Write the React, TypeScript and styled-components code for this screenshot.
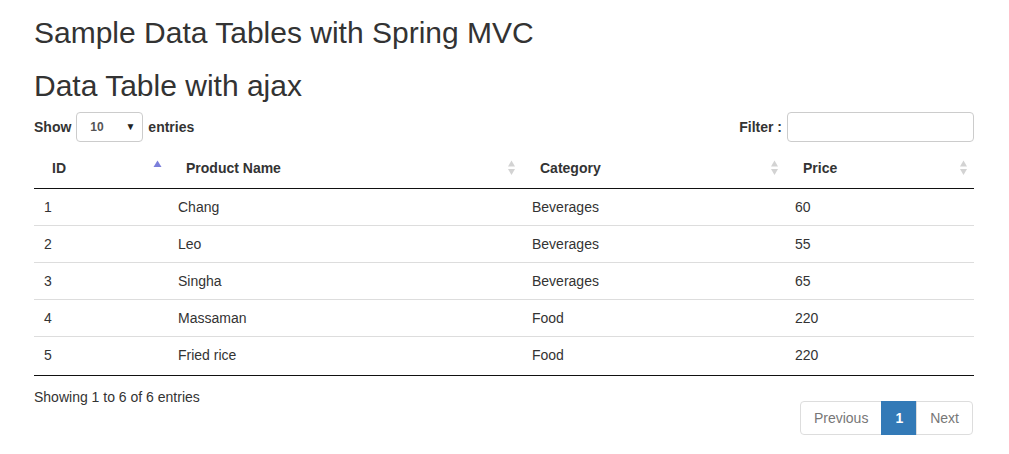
import styled, { createGlobalStyle } from 'styled-components';

const GlobalStyle = createGlobalStyle`
  body {
    margin: 0;
    background: #fff;
    font-family: "Liberation Sans", Arial, sans-serif;
    font-size: 14px;
    line-height: 20px;
    color: #333;
  }
  * { box-sizing: border-box; }
`;

const products = [
  { id: 1, name: 'Chang', category: 'Beverages', price: 60 },
  { id: 2, name: 'Leo', category: 'Beverages', price: 55 },
  { id: 3, name: 'Singha', category: 'Beverages', price: 65 },
  { id: 4, name: 'Massaman', category: 'Food', price: 220 },
  { id: 5, name: 'Fried rice', category: 'Food', price: 220 },
];

const columns = [
  { label: 'ID', width: 134, sort: 'asc' as const },
  { label: 'Product Name', width: 354, sort: 'both' as const },
  { label: 'Category', width: 263, sort: 'both' as const },
  { label: 'Price', width: 189, sort: 'both' as const },
];

const Container = styled.div`
  width: 940px;
  margin: 0 35px 0 34px;
`;

const Heading = styled.h2`
  font-size: 30px;
  font-weight: 500;
  line-height: 33px;
  margin: 16px 0 10px;
  & + & {
    margin-top: 20px;
  }
`;

const Controls = styled.div`
  display: flex;
  justify-content: space-between;
  align-items: center;
  height: 30px;
`;

const Label = styled.label`
  display: flex;
  align-items: center;
  gap: 5px;
  font-weight: bold;
`;

const SelectWrap = styled.div`
  position: relative;
  width: 67px;
  height: 30px;
`;

const Select = styled.select`
  appearance: none;
  width: 100%;
  height: 100%;
  padding: 0 0 0 13px;
  border: 1px solid #ccc;
  border-radius: 4px;
  background: #fff;
  font-family: "Liberation Sans", Arial, sans-serif;
  font-size: 12px;
  font-weight: bold;
  color: #555;
  outline: none;
`;

const Caret = styled.span`
  position: absolute;
  right: 8px;
  top: 50%;
  transform: translateY(-50%);
  font-size: 10px;
  line-height: 10px;
  color: #222;
  pointer-events: none;
`;

const FilterInput = styled.input`
  width: 187px;
  height: 30px;
  border: 1px solid #ccc;
  border-radius: 4px;
  padding: 4px 10px;
  outline: none;
`;

const Table = styled.table`
  width: 940px;
  margin-top: 6px;
  border-collapse: separate;
  border-spacing: 0;
  table-layout: fixed;
  border-bottom: 1px solid #111;
`;

const Th = styled.th`
  position: relative;
  padding: 10px 18px;
  text-align: left;
  font-weight: bold;
  border-bottom: 1px solid #111;
`;

const SortIcon = styled.svg`
  position: absolute;
  right: 6px;
  top: 50%;
  transform: translateY(-50%);
`;

const Td = styled.td`
  padding: 8px 10px;
  tr + tr > & {
    border-top: 1px solid #ddd;
  }
  tr:last-child > & {
    padding-bottom: 10px;
  }
`;

const Footer = styled.div`
  display: flex;
  justify-content: space-between;
  align-items: flex-start;
`;

const Info = styled.div`
  padding-top: 11px;
`;

const Pagination = styled.ul`
  display: flex;
  list-style: none;
  margin: 25px 1px 0 0;
  padding: 0;
`;

const PageButton = styled.li<{ $active?: boolean }>`
  padding: 6px 13px;
  line-height: 20px;
  border: 1px solid ${p => (p.$active ? '#337ab7' : '#ddd')};
  background: ${p => (p.$active ? '#337ab7' : '#fff')};
  color: ${p => (p.$active ? '#fff' : '#777')};
  font-weight: ${p => (p.$active ? 'bold' : 'normal')};
  & + & {
    margin-left: -1px;
  }
  &:first-child {
    border-radius: 4px 0 0 4px;
  }
  &:last-child {
    border-radius: 0 4px 4px 0;
  }
`;

function SortIndicator({ kind }: { kind: 'asc' | 'both' }) {
  if (kind === 'asc') {
    return (
      <SortIcon width="9" height="16" viewBox="0 0 9 16">
        <path d="M4.5 0.5 L8.5 7 L0.5 7 Z" fill="#7b7fdb" />
      </SortIcon>
    );
  }
  return (
    <SortIcon width="9" height="16" viewBox="0 0 9 16">
      <path d="M4.5 0.5 L8 6.5 L1 6.5 Z" fill="#d3d3d3" />
      <path d="M1 9 L8 9 L4.5 15 Z" fill="#d3d3d3" />
    </SortIcon>
  );
}

export default function App() {
  return (
    <Container>
      <GlobalStyle />
      <Heading>Sample Data Tables with Spring MVC</Heading>
      <Heading>Data Table with ajax</Heading>

      <Controls>
        <Label>
          Show
          <SelectWrap>
            <Select defaultValue="10">
              <option value="10">10</option>
              <option value="25">25</option>
              <option value="50">50</option>
            </Select>
            <Caret>▼</Caret>
          </SelectWrap>
          entries
        </Label>
        <Label>
          Filter :
          <FilterInput type="text" />
        </Label>
      </Controls>

      <Table>
        <colgroup>
          {columns.map(c => (
            <col key={c.label} style={{ width: c.width }} />
          ))}
        </colgroup>
        <thead>
          <tr>
            {columns.map(c => (
              <Th key={c.label}>
                {c.label}
                <SortIndicator kind={c.sort} />
              </Th>
            ))}
          </tr>
        </thead>
        <tbody>
          {products.map(p => (
            <tr key={p.id}>
              <Td>{p.id}</Td>
              <Td>{p.name}</Td>
              <Td>{p.category}</Td>
              <Td>{p.price}</Td>
            </tr>
          ))}
        </tbody>
      </Table>

      <Footer>
        <Info>Showing 1 to 6 of 6 entries</Info>
        <Pagination>
          <PageButton>Previous</PageButton>
          <PageButton $active>1</PageButton>
          <PageButton>Next</PageButton>
        </Pagination>
      </Footer>
    </Container>
  );
}
